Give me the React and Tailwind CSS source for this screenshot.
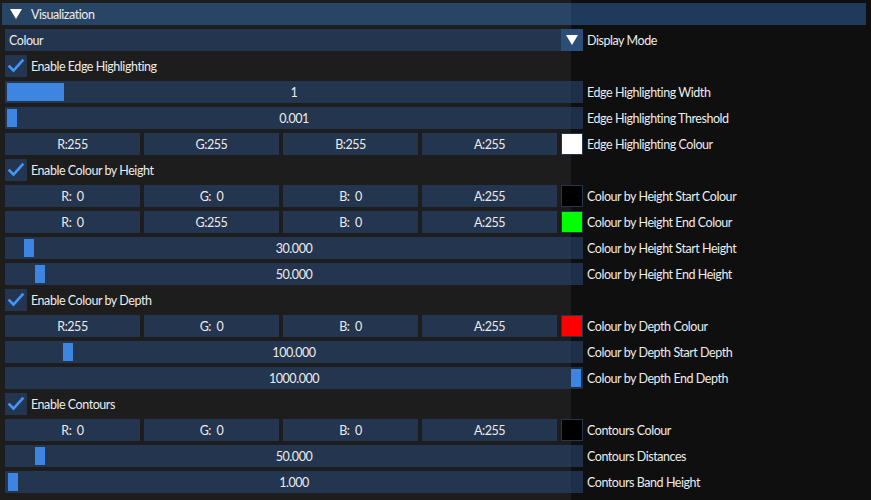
import React from 'react';

const frame = 'bg-[linear-gradient(to_right,#23354f_571px,#1d2f49_571px)] bg-fixed';

const Label = ({ children }) => (
  <span className="ml-[4px] whitespace-nowrap pt-[3px]">{children}</span>
);

const Slider = ({ value, left, width = 10, label }) => (
  <div className="flex h-[22px] items-center">
    <div className={`relative h-[22px] w-[578px] ${frame}`}>
      <div
        className="absolute top-[2px] bottom-[2px] bg-[#3d85e0]"
        style={{ left, width }}
      />
      <div className="relative flex h-full items-center justify-center pt-[3px]">{value}</div>
    </div>
    <Label>{label}</Label>
  </div>
);

const ColourRow = ({ r, g, b, a, swatch, label }) => (
  <div className="flex h-[22px] items-center">
    <div className="flex w-[578px] gap-[4px]">
      {[r, g, b, a].map((v, i) => (
        <div
          key={i}
          className={`flex h-[22px] w-[135px] items-center justify-center whitespace-pre pt-[3px] ${frame}`}
        >
          {v}
        </div>
      ))}
      <div
        className="h-[22px] w-[22px] border border-[#23354f]"
        style={{ backgroundColor: swatch }}
      />
    </div>
    <Label>{label}</Label>
  </div>
);

const Check = ({ label }) => (
  <div className="flex h-[22px] items-center">
    <div className={`flex h-[22px] w-[22px] items-center justify-center ${frame}`}>
      <svg width="22" height="22" viewBox="0 0 22 22">
        <polyline
          points="4.5,11.5 8.5,15.5 17.5,5.5"
          fill="none"
          stroke="#4296fa"
          strokeWidth="2.6"
          strokeLinecap="square"
        />
      </svg>
    </div>
    <span className="ml-[4px] pt-[3px]">{label}</span>
  </div>
);

const Tri = () => (
  <svg width="12" height="10" viewBox="0 0 12 10">
    <polygon points="0,0 12,0 6,10" fill="#ffffff" />
  </svg>
);

export default function App() {
  return (
    <div
      className="h-[500px] w-[871px] overflow-hidden bg-[linear-gradient(to_right,#1d1d1d_571px,#0f0f0f_571px)] text-[12.5px] leading-none tracking-[-0.45px] text-[#ececec]"
      style={{ fontFamily: 'Lato, "Noto Sans", sans-serif' }}
    >
      <div className="pt-[3px] px-[2px]">
        <div className="flex h-[22px] w-[864px] items-center bg-[linear-gradient(to_right,#284566_571px,#1f3a5a_571px)] bg-fixed">
          <span className="ml-[8px] flex">
            <Tri />
          </span>
          <span className="ml-[9px] pt-[3px]">Visualization</span>
        </div>
      </div>

      <div className="mt-[4px] flex flex-col gap-[4px] px-[5px]">
        <div className="flex h-[22px] items-center">
          <div className={`flex h-[22px] w-[578px] items-center ${frame}`}>
            <span className="ml-[4px] flex-1 pt-[3px]">Colour</span>
            <div className="flex h-[22px] w-[22px] items-center justify-center bg-[#2b4d77]">
              <Tri />
            </div>
          </div>
          <Label>Display Mode</Label>
        </div>

        <Check label="Enable Edge Highlighting" />
        <Slider value="1" left={2} width={57} label="Edge Highlighting Width" />
        <Slider value="0.001" left={2} label="Edge Highlighting Threshold" />
        <ColourRow r="R:255" g="G:255" b="B:255" a="A:255" swatch="#ffffff" label="Edge Highlighting Colour" />

        <Check label="Enable Colour by Height" />
        <ColourRow r="R:  0" g="G:  0" b="B:  0" a="A:255" swatch="#000000" label="Colour by Height Start Colour" />
        <ColourRow r="R:  0" g="G:255" b="B:  0" a="A:255" swatch="#00ff00" label="Colour by Height End Colour" />
        <Slider value="30.000" left={19} label="Colour by Height Start Height" />
        <Slider value="50.000" left={30} label="Colour by Height End Height" />

        <Check label="Enable Colour by Depth" />
        <ColourRow r="R:255" g="G:  0" b="B:  0" a="A:255" swatch="#ff0000" label="Colour by Depth Colour" />
        <Slider value="100.000" left={58} label="Colour by Depth Start Depth" />
        <Slider value="1000.000" left={566} label="Colour by Depth End Depth" />

        <Check label="Enable Contours" />
        <ColourRow r="R:  0" g="G:  0" b="B:  0" a="A:255" swatch="#000000" label="Contours Colour" />
        <Slider value="50.000" left={30} label="Contours Distances" />
        <Slider value="1.000" left={3} label="Contours Band Height" />
      </div>
    </div>
  );
}
